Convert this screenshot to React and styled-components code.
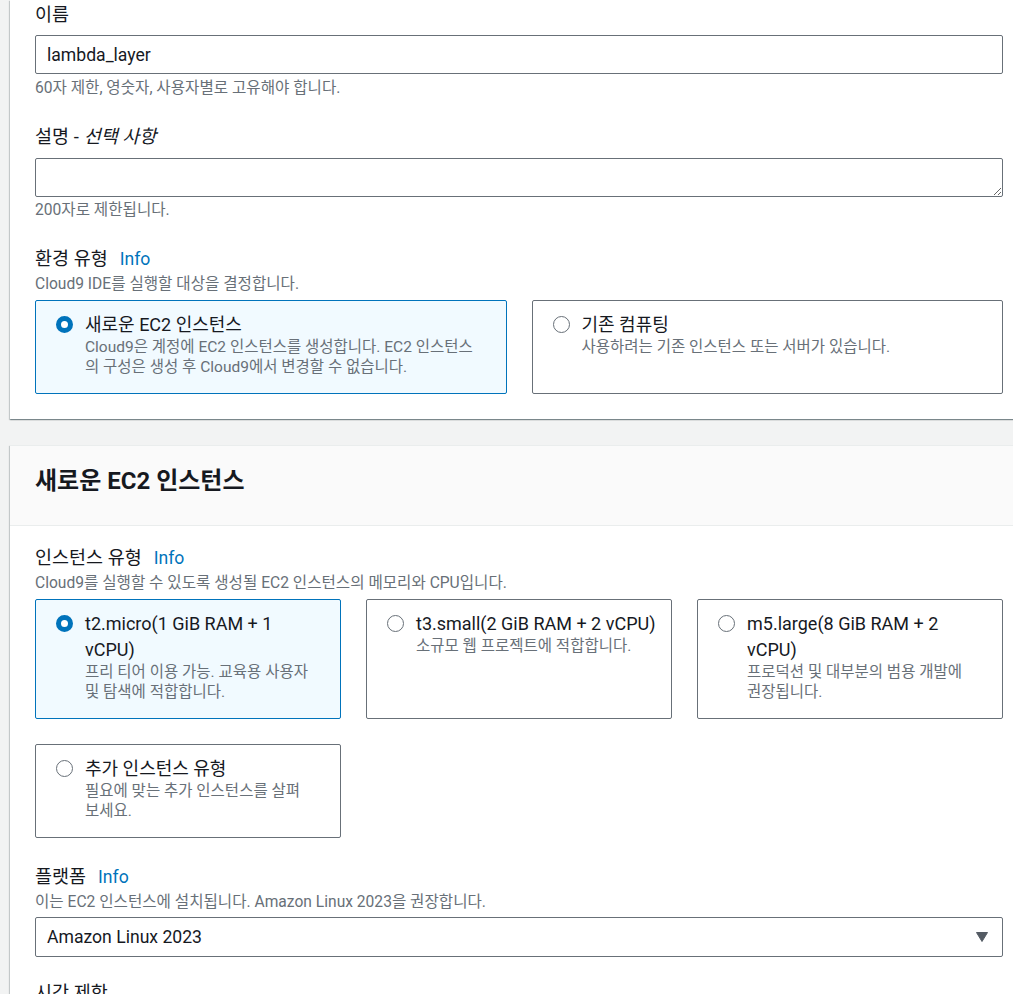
import React from 'react';
import styled, { createGlobalStyle } from 'styled-components';

// --- Global ---
const GlobalStyle = createGlobalStyle`
  html, body {
    margin: 0;
    padding: 0;
    overflow: hidden;
    background: #f2f3f3;
  }
  body {
    font-family: Roboto, "Noto Sans CJK KR", sans-serif;
    color: #16191f;
  }
  * {
    box-sizing: border-box;
  }
`;

// --- Layout ---
const Page = styled.div`
  width: 1013px;
  height: 994px;
  overflow: hidden;
  padding-left: 10px;
  display: flex;
  flex-direction: column;
  gap: 26px;
`;

const Panel = styled.section`
  flex: none;
  width: 1018px;
  background: #fff;
  box-shadow: 0 1px 1px 0 rgba(0, 28, 36, 0.3), 1px 1px 1px 0 rgba(0, 28, 36, 0.15),
    -1px 1px 1px 0 rgba(0, 28, 36, 0.15);
`;

const PanelHeader = styled.header`
  padding: 22px 25px 30px;
  background: #fafafa;
  border-top: 1px solid #eaeded;
  border-bottom: 1px solid #eaeded;
`;

const PanelTitle = styled.h2`
  margin: 0;
  font-size: 24px;
  line-height: 27px;
  font-weight: 700;
`;

const PanelBody = styled.div`
  padding: ${({ $top }) => $top}px 25px ${({ $bottom }) => $bottom}px;
`;

// --- Form field ---
const Field = styled.div`
  margin-top: ${({ $gap }) => $gap || 0}px;
`;

const Label = styled.div`
  display: flex;
  align-items: baseline;
  font-size: 18.5px;
  line-height: 26px;
  margin-bottom: ${({ $mb }) => $mb || 0}px;

  em {
    margin-left: 5px;
    font-style: italic;
  }
`;

const InfoLink = styled.a`
  margin-left: 12px;
  color: #0073bb;
  font-size: 17.6px;
  text-decoration: none;
`;

const Hint = styled.div`
  margin-top: ${({ $top }) => $top}px;
  font-size: 15.6px;
  line-height: 19px;
  color: #687078;
`;

const TextInput = styled.input`
  display: block;
  width: 100%;
  height: 39px;
  padding: 0 11px;
  border: 1px solid #687078;
  border-radius: 2px;
  font-family: inherit;
  font-size: 17.6px;
  color: #16191f;
  background: #fff;
  outline: none;
`;

const TextArea = styled.textarea`
  display: block;
  width: 100%;
  height: 39px;
  min-height: 39px;
  padding: 6px 11px;
  border: 1px solid #687078;
  border-radius: 2px;
  font-family: inherit;
  font-size: 17.6px;
  resize: vertical;
  outline: none;
`;

const SelectBox = styled.div`
  display: flex;
  align-items: center;
  justify-content: space-between;
  height: 40px;
  margin-top: 5px;
  padding: 0 14px 0 11px;
  border: 1px solid #687078;
  border-radius: 2px;
  font-size: 17.6px;
`;

// --- Tiles ---
const TileGrid = styled.div`
  display: grid;
  grid-template-columns: repeat(${({ $cols }) => $cols}, 1fr);
  gap: 25px;
  margin-top: 6px;
`;

const Tile = styled.div`
  display: flex;
  gap: 12px;
  padding: 11px 6px 16px 20px;
  border: 1px solid ${({ $selected }) => ($selected ? '#0073bb' : '#687078')};
  border-radius: 2px;
  background: ${({ $selected }) => ($selected ? '#f1faff' : '#fff')};
`;

const RadioDot = styled.span`
  flex: none;
  width: 17px;
  height: 17px;
  margin-top: 4px;
  border-radius: 50%;
  background: #fff;
  border: ${({ $checked }) => ($checked ? '5.5px solid #0073bb' : '1.6px solid #687078')};
`;

const TileText = styled.div`
  min-width: 0;
`;

const TileTitle = styled.div`
  font-size: 18px;
  line-height: 26px;
  white-space: nowrap;
`;

const TileDesc = styled.div`
  font-size: 15.5px;
  line-height: 19.5px;
  color: #687078;
  white-space: nowrap;
`;

const Caret = () => (
  <svg width="12" height="10" viewBox="0 0 12 10">
    <path d="M0.5 0.5 H11.5 L6 9.5 Z" fill="#545b64" stroke="#545b64" strokeLinejoin="round" />
  </svg>
);

const Lines = ({ lines }) =>
  lines.map((l, i) => (
    <React.Fragment key={i}>
      {i > 0 && <br />}
      {l}
    </React.Fragment>
  ));

const RadioTile = ({ selected, title, desc }) => (
  <Tile $selected={selected}>
    <RadioDot $checked={selected} />
    <TileText>
      <TileTitle>
        <Lines lines={title} />
      </TileTitle>
      <TileDesc>
        <Lines lines={desc} />
      </TileDesc>
    </TileText>
  </Tile>
);

const envTypes = [
  {
    selected: true,
    title: ['새로운 EC2 인스턴스'],
    desc: ['Cloud9은 계정에 EC2 인스턴스를 생성합니다. EC2 인스턴스', '의 구성은 생성 후 Cloud9에서 변경할 수 없습니다.'],
  },
  {
    selected: false,
    title: ['기존 컴퓨팅'],
    desc: ['사용하려는 기존 인스턴스 또는 서버가 있습니다.'],
  },
];

const instanceTypes = [
  {
    selected: true,
    title: ['t2.micro(1 GiB RAM + 1', 'vCPU)'],
    desc: ['프리 티어 이용 가능. 교육용 사용자', '및 탐색에 적합합니다.'],
  },
  {
    selected: false,
    title: ['t3.small(2 GiB RAM + 2 vCPU)'],
    desc: ['소규모 웹 프로젝트에 적합합니다.'],
  },
  {
    selected: false,
    title: ['m5.large(8 GiB RAM + 2', 'vCPU)'],
    desc: ['프로덕션 및 대부분의 범용 개발에', '권장됩니다.'],
  },
  {
    selected: false,
    title: ['추가 인스턴스 유형'],
    desc: ['필요에 맞는 추가 인스턴스를 살펴', '보세요.'],
  },
];

export default function App() {
  return (
    <>
      <GlobalStyle />
      <Page>
        <Panel>
          <PanelBody $top={2} $bottom={25}>
            <Field>
              <Label $mb={7}>이름</Label>
              <TextInput defaultValue="lambda_layer" />
              <Hint $top={5}>60자 제한, 영숫자, 사용자별로 고유해야 합니다.</Hint>
            </Field>

            <Field $gap={26}>
              <Label $mb={8}>
                설명 -<em>선택 사항</em>
              </Label>
              <TextArea />
              <Hint $top={4}>200자로 제한됩니다.</Hint>
            </Field>

            <Field $gap={26}>
              <Label>
                환경 유형 <InfoLink>Info</InfoLink>
              </Label>
              <Hint $top={3}>Cloud9 IDE를 실행할 대상을 결정합니다.</Hint>
              <TileGrid $cols={2}>
                {envTypes.map((t, i) => (
                  <RadioTile key={i} {...t} />
                ))}
              </TileGrid>
            </Field>
          </PanelBody>
        </Panel>

        <Panel>
          <PanelHeader>
            <PanelTitle>새로운 EC2 인스턴스</PanelTitle>
          </PanelHeader>
          <PanelBody $top={19} $bottom={26}>
            <Field>
              <Label>
                인스턴스 유형 <InfoLink>Info</InfoLink>
              </Label>
              <Hint $top={3}>Cloud9를 실행할 수 있도록 생성될 EC2 인스턴스의 메모리와 CPU입니다.</Hint>
              <TileGrid $cols={3}>
                {instanceTypes.map((t, i) => (
                  <RadioTile key={i} {...t} />
                ))}
              </TileGrid>
            </Field>

            <Field $gap={26}>
              <Label>
                플랫폼 <InfoLink>Info</InfoLink>
              </Label>
              <Hint $top={3}>이는 EC2 인스턴스에 설치됩니다. Amazon Linux 2023을 권장합니다.</Hint>
              <SelectBox>
                <span>Amazon Linux 2023</span>
                <Caret />
              </SelectBox>
            </Field>

            <Field $gap={23}>
              <Label>시간 제한</Label>
            </Field>
          </PanelBody>
        </Panel>
      </Page>
    </>
  );
}
